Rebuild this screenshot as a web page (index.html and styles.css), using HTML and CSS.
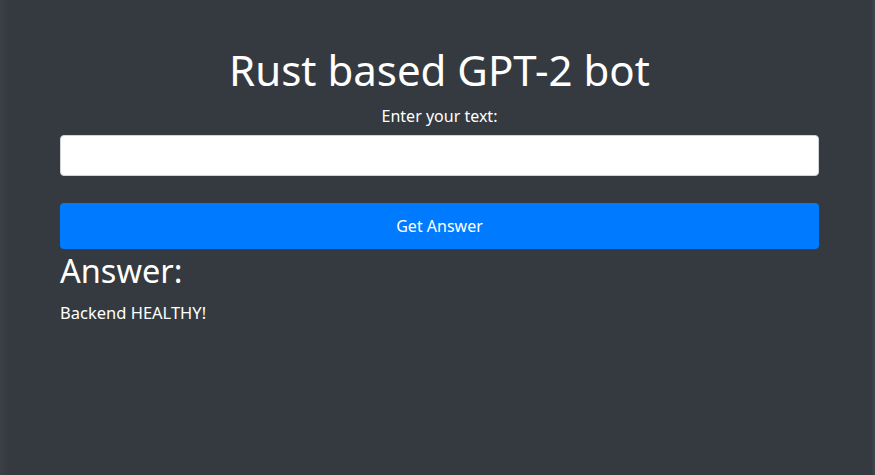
FILE: index.html
```html
<!DOCTYPE html>
<html lang="en">
<head>
<meta charset="utf-8">
<title>Rust based GPT-2 bot</title>
<link rel="stylesheet" href="styles.css">
</head>
<body>
<main class="page">
  <h1 class="title">Rust based GPT-2 bot</h1>
  <form class="form">
    <label class="label" for="q">Enter your text:</label>
    <input class="input" id="q" type="text">
    <button class="btn" type="button">Get Answer</button>
  </form>
  <h2 class="answer-title">Answer:</h2>
  <p class="answer">Backend HEALTHY!</p>
</main>
</body>
</html>
```

FILE: styles.css
```css
html, body {
  margin: 0;
  height: 100%;
}
body {
  background:
    linear-gradient(to right, #3c4046 0px, #383c43 5px, #343a40 9px, #343a40 872px, #3e4248 873px, #3e4248 875px);
  color: #fff;
  font-family: "Noto Sans", "Open Sans", sans-serif;
  font-size: 16px;
}
.page {
  padding: 45px 56px 0 60px;
  display: flex;
  flex-direction: column;
}
.title {
  margin: 0;
  text-align: center;
  font-size: 42px;
  font-weight: 400;
  line-height: 1.2;
}
.form {
  display: flex;
  flex-direction: column;
  margin-top: 9px;
}
.label {
  text-align: center;
  font-size: 16px;
  line-height: 24px;
  margin-bottom: 7px;
}
.input {
  height: 41px;
  box-sizing: border-box;
  border: 1px solid #ced4da;
  border-radius: 4px;
  background: #fff;
  padding: 6px 12px;
  font: inherit;
}
.btn {
  margin-top: 27px;
  height: 46px;
  border: none;
  border-radius: 4px;
  background: #007bff;
  color: #fff;
  font: inherit;
  font-size: 16px;
}
.answer-title {
  margin: 2px 0 0;
  font-size: 32.5px;
  font-weight: 400;
  line-height: 1.2;
}
.answer {
  margin: 11px 0 0;
  font-size: 16.5px;
  line-height: 24px;
}
```
